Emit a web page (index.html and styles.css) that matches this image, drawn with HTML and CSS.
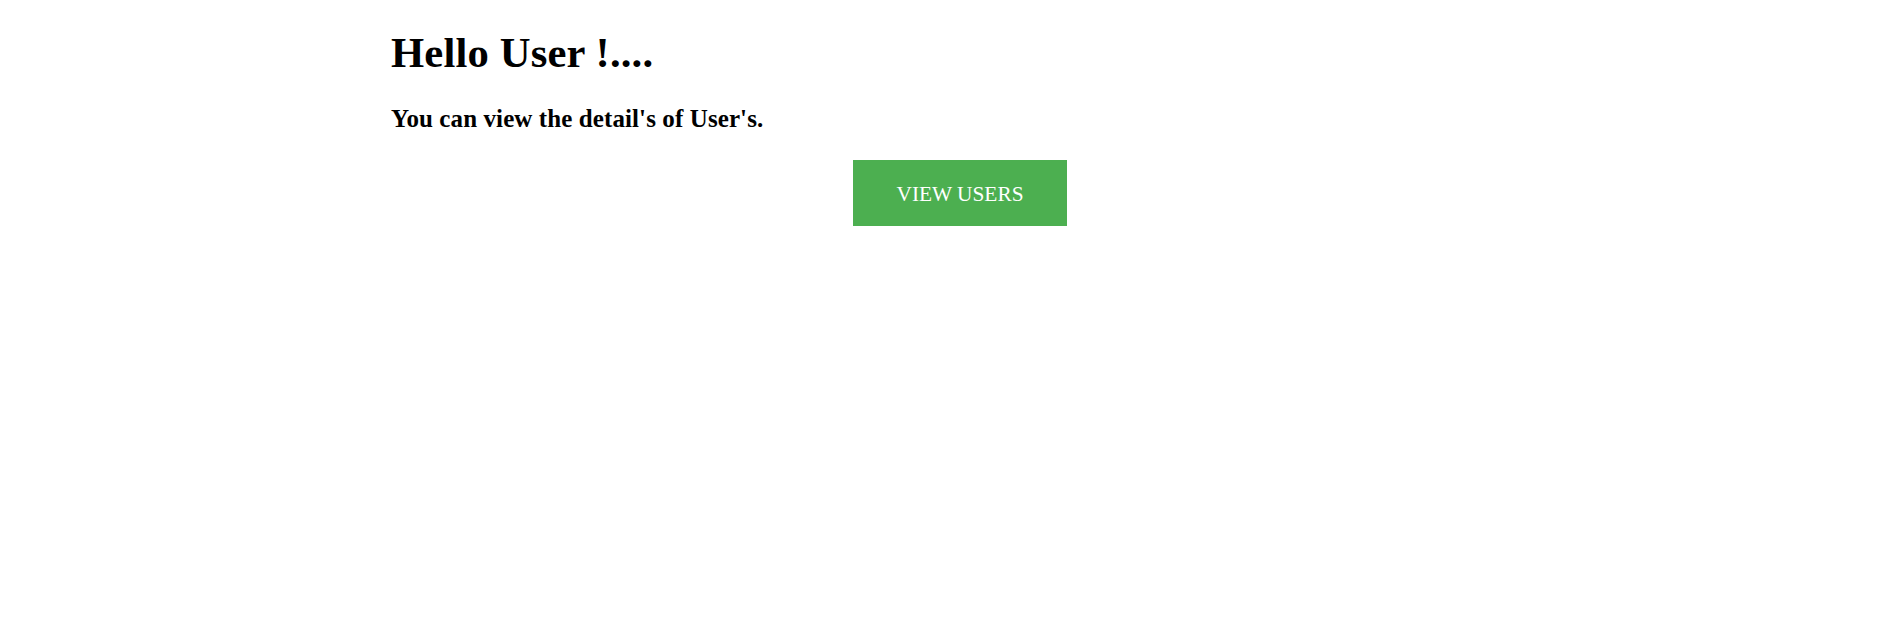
FILE: index.html
```html
<!DOCTYPE html>
<html>
<head>
<meta charset="utf-8">
<title>Users</title>
<link rel="stylesheet" href="styles.css">
</head>
<body>
<div class="page">
  <h1 class="title">Hello User !....</h1>
  <h3 class="subtitle">You can view the detail's of User's.</h3>
  <div class="actions">
    <button class="btn-view">VIEW USERS</button>
  </div>
</div>
</body>
</html>
```
FILE: styles.css
```css
html, body {
  margin: 0;
  padding: 0;
  background: #ffffff;
}
body {
  font-family: "Liberation Serif", "Times New Roman", serif;
  color: #000000;
}
.page {
  padding-left: 391px;
}
.title {
  margin: 29px 0 0;
  font-size: 42.67px;
  font-weight: bold;
  line-height: 47px;
  letter-spacing: 0.15px;
}
.subtitle {
  margin: 29px 0 0;
  font-size: 25px;
  font-weight: bold;
  line-height: 28px;
  letter-spacing: 0.1px;
}
.actions {
  display: flex;
  margin-top: 27px;
  padding-left: 462px;
}
.btn-view {
  width: 214px;
  height: 66px;
  padding: 2px 0 0;
  border: none;
  background: #4caf50;
  color: #ffffff;
  font-family: "Liberation Serif", "Times New Roman", serif;
  font-size: 21.33px;
  line-height: 25px;
  cursor: pointer;
}
```
